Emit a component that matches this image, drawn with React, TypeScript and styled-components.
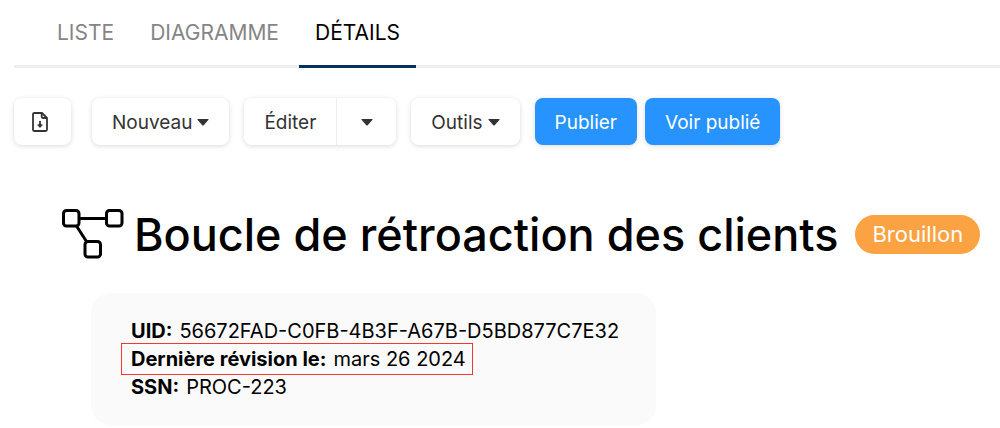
import React from "react";
import styled, { createGlobalStyle, css } from "styled-components";

const GlobalStyle = createGlobalStyle`
  *, *::before, *::after { box-sizing: border-box; }
  body {
    margin: 0;
    background: #fff;
    color: #000;
    font-family: Inter, "Liberation Sans", sans-serif;
    font-size: 20px;
  }
`;

const Page = styled.div`
  padding-left: 14px;
`;

const TabBar = styled.nav`
  display: flex;
  gap: 4px;
  padding-left: 27px;
  box-shadow: inset 0 -3px #eee;
`;

const Tab = styled.a<{ $active?: boolean }>`
  height: 68px;
  padding: 0 16px;
  border-bottom: 3px solid ${(p) => (p.$active ? "#052f5f" : "transparent")};
  color: ${(p) => (p.$active ? "#000" : "#858585")};
  font-size: 21px;
  line-height: 66px;
  text-decoration: none;
`;

const Toolbar = styled.div`
  display: flex;
  align-items: center;
  gap: 15px;
  padding: 30px 0;
`;

const raised = css`
  border-radius: 8px;
  box-shadow: 0 1px 5px rgba(0, 0, 0, 0.15);
`;

const ButtonBase = styled.button`
  display: inline-flex;
  align-items: center;
  justify-content: center;
  height: 47px;
  padding: 2px 20px 0;
  border: 0;
  background: #fff;
  color: #333;
  font: inherit;
  font-size: 19px;
  white-space: nowrap;
  cursor: pointer;
`;

const Button = styled(ButtonBase)<{ $primary?: boolean }>`
  ${raised}
  gap: 5px;
  ${(p) => p.$primary && css`background: #2693ff; color: #fff;`}
`;

const ExportButton = styled(Button)`
  margin-right: 6px;
  padding: 0 23px 0 18px;
`;

const SplitButton = styled.div`
  ${raised}
  display: flex;
  overflow: hidden;
`;

const SplitToggle = styled(ButtonBase)`
  width: 60px;
  border-left: 1px solid #eee;
`;

const Actions = styled.div`
  display: flex;
  gap: 8px;
`;

const Heading = styled.header`
  display: flex;
  align-items: center;
  padding: 30px 18px 30px 48px;

  svg { flex-shrink: 0; }
`;

const Title = styled.h1`
  margin: 0 17px 0 10px;
  padding-top: 2px;
  font-size: 45px;
  font-weight: 500;
  line-height: 56px;
  white-space: nowrap;
`;

const Badge = styled.span`
  padding: 0 17px;
  border-radius: 20px;
  background: #fba342;
  color: #fff;
  font-size: 22px;
  line-height: 39px;
`;

const Card = styled.dl`
  width: fit-content;
  margin: 0 0 3px 77px;
  padding: 24px 32px;
  border-radius: 20px;
  background: #fafafa;
`;

const Field = styled.div<{ $highlight?: boolean }>`
  display: flex;
  gap: 7px;
  width: fit-content;
  padding: 0 5px 0 8px;
  outline: ${(p) => (p.$highlight ? "1px solid #f5382c" : "0")};
  outline-offset: 1px;
  line-height: 28px;

  dt { font-weight: 700; }
  dd { margin: 0; }
`;

const Caret = () => (
  <svg width="12" height="7" viewBox="0 0 12 7" fill="currentColor" aria-hidden="true">
    <path d="M1 0h10q1 0 .5.8L6.7 6.2q-.7.7-1.4 0L.5.8Q0 0 1 0z" />
  </svg>
);

const FileDownIcon = () => (
  <svg width="16" height="20" viewBox="0 0 16 20" fill="none" stroke="currentColor" strokeWidth="1.8" strokeLinejoin="round" aria-hidden="true">
    <path d="M2.4 1H10l5 5v11.5q0 1.5-1.5 1.5h-11Q1 19 1 17.500V2.500Q1 1 2.400 1z" />
    <path d="M9.700 1v3.800q0 1.200 1.200 1.200H15" />
    <path d="M8 9v6" />
    <path d="M5.600 12.800h4.800L8 15.500z" fill="currentColor" strokeWidth=".8" />
  </svg>
);

const ProcessIcon = () => (
  <svg width="62" height="50" viewBox="0 0 62 50" fill="none" stroke="currentColor" strokeWidth="3" aria-hidden="true">
    <rect x="1.500" y="1.500" width="15.500" height="15.500" rx="3" />
    <rect x="44.500" y="1.500" width="15.500" height="15.500" rx="3" />
    <rect x="23" y="32.500" width="15.500" height="15.500" rx="3" />
    <path d="M17 9.500h27.500M14.500 17l10 15.500" />
  </svg>
);

const fields = [
  { label: "UID:", value: "56672FAD-C0FB-4B3F-A67B-D5BD877C7E32" },
  { label: "Dernière révision le:", value: "mars 26 2024", highlight: true },
  { label: "SSN:", value: "PROC-223" },
];

export default function App() {
  return (
    <>
      <GlobalStyle />
      <Page>
        <TabBar>
          <Tab href="#liste">LISTE</Tab>
          <Tab href="#diagramme">DIAGRAMME</Tab>
          <Tab href="#details" $active aria-current="page">DÉTAILS</Tab>
        </TabBar>
        <Toolbar>
          <ExportButton aria-label="Exporter"><FileDownIcon /></ExportButton>
          <Button>Nouveau<Caret /></Button>
          <SplitButton>
            <ButtonBase>Éditer</ButtonBase>
            <SplitToggle aria-label="Plus d’options"><Caret /></SplitToggle>
          </SplitButton>
          <Button>Outils<Caret /></Button>
          <Actions>
            <Button $primary>Publier</Button>
            <Button $primary>Voir publié</Button>
          </Actions>
        </Toolbar>
        <Heading>
          <ProcessIcon />
          <Title>Boucle de rétroaction des clients</Title>
          <Badge>Brouillon</Badge>
        </Heading>
        <Card>
          {fields.map((f) => (
            <Field key={f.label} $highlight={f.highlight}>
              <dt>{f.label}</dt>
              <dd>{f.value}</dd>
            </Field>
          ))}
        </Card>
      </Page>
    </>
  );
}
